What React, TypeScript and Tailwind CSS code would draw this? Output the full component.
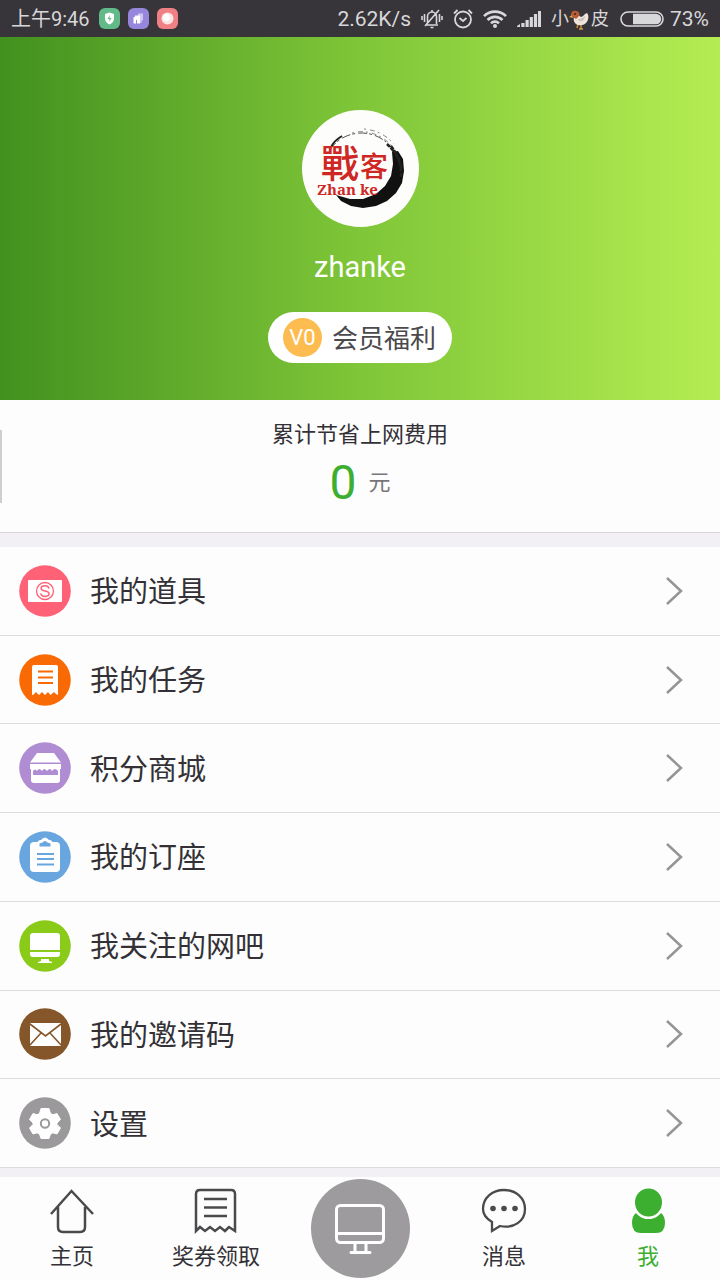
import type { ReactNode } from "react";

const StatusBar = () => (
  <header className="flex h-[37px] shrink-0 items-center justify-between bg-[#37343a] px-[11px] text-[21px] leading-6 text-[#d8d7d9]">
    <div className="flex items-center gap-2">
      <span className="pr-px text-[20px]">上午9:46</span>
      <svg className="h-[21px] w-[21px]" viewBox="0 0 21 21">
        <rect width="21" height="21" rx="6" fill="#62ba88" />
        <path d="M10.500 4.500l4.500 1.500v4.500c0 3-2 5-4.500 6-2.500-1-4.500-3-4.500-6V6z" fill="#fff" />
        <path d="M11 7l-2.500 4h2l-.5 3 2.500-4h-2z" fill="#62ba88" />
      </svg>
      <svg className="h-[21px] w-[21px]" viewBox="0 0 21 21">
        <rect width="21" height="21" rx="6" fill="#9787dc" />
        <path d="M10 5.500h5v7h-1.500V15H10z" fill="#cfc8f2" />
        <path d="M5.500 9h1.500V7.500h5v8H9V12H8v3.500H5.500z" fill="#fff" />
      </svg>
      <svg className="h-[21px] w-[21px]" viewBox="0 0 21 21">
        <rect width="21" height="21" rx="6" fill="#ef8083" />
        <circle cx="10.500" cy="10.500" r="6" fill="#fbe4e4" />
        <circle cx="9.500" cy="9.500" r="3.500" fill="#fff" />
      </svg>
    </div>
    <div className="flex items-center gap-[10px]">
      <span>2.62K/s</span>
      {/* muted bell */}
      <svg className="h-[20px] w-[22px]" viewBox="0 0 22 20" fill="none" stroke="currentColor" strokeWidth="1.600">
        <path d="M5 16h12M6.500 15V7.500a4.500 4.500 0 0 1 9 0V15M11 1v2M9.500 18.500h3M18 1L4 17M3.500 5v8M1 7v4M18.500 5v8M21 7v4" />
      </svg>
      <svg className="h-[20px] w-[20px]" viewBox="0 0 20 20" fill="none" stroke="currentColor" strokeWidth="1.800">
        <circle cx="10" cy="10.500" r="8" />
        <path d="M6.500 9l3.500 3 3.500-3M1 4.500L4.500 1M19 4.500L15.500 1" />
      </svg>
      <svg className="h-[18px] w-[24px]" viewBox="0 0 24 18" fill="none" stroke="currentColor" strokeWidth="2.600">
        <path d="M1 6.200a15.500 15.500 0 0 1 22 0M4.500 10a10.500 10.500 0 0 1 15 0M8 13.300a5.600 5.600 0 0 1 8 0" />
        <circle cx="12" cy="16" r="2" fill="currentColor" stroke="none" />
      </svg>
      <svg className="h-[17px] w-[24px]" viewBox="0 0 24 17" fill="currentColor">
        <path d="M0 17v-1l3-2v3zM4.300 13h3.200v4H4.300zM8.500 10h3.200v7H8.500zM12.700 7h3.200v10h-3.200zM16.900 4h3.200v13h-3.200zM21 1h3v16h-3z" />
      </svg>
      <span className="flex items-center pr-px text-[18px]">
        小
        <svg className="h-[22px] w-[22px]" viewBox="0 0 22 22">
          <path d="M9 16l-1 4M12 16v5M10 21h4" stroke="#d8943c" strokeWidth="1.400" />
          <path d="M5 5c4 0 5 3 7 4 2 0 3-3 6-4 2 2 2 7-1 10-3 3-9 3-11 0-2-3-1-4-1-10z" fill="#eee4dc" />
          <path d="M2 7c0-3 2-5 5-4 3 0 4 3 3 5l-3 3-3-2z" fill="#b85a35" />
          <path d="M9 11c3 0 5-1 7-3 0 4-3 6-6 5z" fill="#cfbfb5" />
          <circle cx="6" cy="6" r="1" fill="#42251c" />
          <path d="M3 7L0 9l4 1z" fill="#e4a842" />
        </svg>
        皮
      </span>
      <span className="flex items-center gap-[6px]">
        <svg className="h-[16px] w-[44px]" viewBox="0 0 44 16">
          <rect x="1" y="1" width="42" height="14" rx="7" fill="none" stroke="currentColor" strokeWidth="1.600" />
          <path d="M13 2.800h23a5.200 5.200 0 0 1 0 10.400H13z" fill="currentColor" />
        </svg>
        73%
      </span>
    </div>
  </header>
);

const Avatar = () => (
  <svg className="h-[117px] w-[117px]" viewBox="0 0 117 117" role="img" aria-label="zhanke">
    <circle cx="58.500" cy="58.500" r="58.500" fill="#fdfefc" />
    {/* brush ring */}
    <path d="M90 42l6-1 5 8 1 12-2 12-6 10-9 8-11 5-13 2-12-2-10-5-5-6 14 4 13 0 13-5 9-8 6-10 2-12z" fill="#111" />
    <path d="M28 40C38 23 65 16 84 32" fill="none" stroke="#555" strokeWidth="1" strokeDasharray="9 2 3 3" />
    <path d="M29 37c2-4 6-8 11-11" fill="none" stroke="#222" strokeWidth="2" />
    <path d="M50 23c14-4 29 1 40 13M62 19c12 1 22 6 30 15" fill="none" stroke="#888" strokeWidth="1" strokeDasharray="2 4 5 3" />
    <path d="M85 34c10 9 15 20 14 33M89 36c6 8 10 15 10 23" fill="none" stroke="#222" strokeWidth="2.500" strokeDasharray="4 1 7 2" />
    <g fill="#cf2724">
      <text x="19" y="67" fontSize="38" fontWeight="500" fontFamily="'Noto Sans CJK TC', sans-serif">戰</text>
      <text x="58" y="67" fontSize="28" fontWeight="500" fontFamily="'Noto Sans CJK TC', sans-serif">客</text>
      <text x="15" y="85" fontSize="15" fontWeight="700" fontFamily="'Noto Serif', 'DejaVu Serif', serif">Zhan ke</text>
    </g>
  </svg>
);

const Disc = ({ color, children }: { color: string; children: ReactNode }) => (
  <svg className="h-[52px] w-[52px] shrink-0" viewBox="0 0 52 52" aria-hidden="true">
    <circle cx="26" cy="26" r="25.800" fill={color} />
    {children}
  </svg>
);

const menu = [
  {
    label: "我的道具",
    icon: (
      <Disc color="#ff6176">
        <rect x="9" y="15" width="34" height="22" rx="1" fill="#fff" />
        <circle cx="26" cy="26" r="8.500" fill="none" stroke="#ff6176" strokeWidth="1.300" />
        <path d="M30 23.500c-.5-2-2-2.800-4-2.800-2.300 0-3.900 1-3.900 2.700 0 3.600 8 1.500 8 5.200 0 1.800-1.700 2.800-4.100 2.800-2.300 0-4-1-4.300-3" fill="none" stroke="#ff6176" strokeWidth="1.500" />
      </Disc>
    ),
  },
  {
    label: "我的任务",
    icon: (
      <Disc color="#f96a05">
        <path d="M13 13q0-2 2-2h22q2 0 2 2v28l-2-1-2-2-3.500 3-2.500-3-3 3-3-3-3 3-3-3-3 3h-1z" fill="#fff" />
        <path d="M19 17.500h15M19 23.500h15M19 29h15" stroke="#f96a05" strokeWidth="1.800" />
      </Disc>
    ),
  },
  {
    label: "积分商城",
    icon: (
      <Disc color="#b08dd3">
        <path d="M18 11h17l7 9.500H11zM11 22h31v5H11z" fill="#fff" />
        <path d="M12 26h29v12q0 3-3 3H15q-3 0-3-3z" fill="#fff" />
        <path d="M14 29q2-3 4 0 2-4 5 0 2-4 5 0 3-4 5 0 3-4 6 0v4H14z" fill="#b08dd3" />
      </Disc>
    ),
  },
  {
    label: "我的订座",
    icon: (
      <Disc color="#69a5df">
        <rect x="11" y="11" width="30" height="30" rx="4" fill="#fff" />
        <path d="M18 14q0-5 4-5 4-5 8 0 4 0 4 5z" fill="#fff" />
        <path d="M20.500 15.500v-3l3-1q2.500-3 5 0l3 1v3z" fill="#69a5df" />
        <path d="M18 23h17M18 28h17M18 33.500h17" stroke="#69a5df" strokeWidth="1.800" />
      </Disc>
    ),
  },
  {
    label: "我关注的网吧",
    icon: (
      <Disc color="#8aca19">
        <path d="M11 30V16q0-3 3-3h24q3 0 3 3v14zM11 32h30v2q0 3-3 3H14q-3 0-3-3zM22 39h8v2l3 1v1H19v-1l3-1z" fill="#fff" />
      </Disc>
    ),
  },
  {
    label: "我的邀请码",
    icon: (
      <Disc color="#85562a">
        <rect x="11" y="15" width="31" height="23" rx="1" fill="#fff" />
        <path d="M11 16l15.500 12L42 16M11 37l11-12M42 37L31 25" fill="none" stroke="#85562a" strokeWidth="1.600" />
      </Disc>
    ),
  },
  {
    label: "设置",
    icon: (
      <Disc color="#9b999b">
        <path
          d="M22 11.500h8l1.500 5 2.500 1.200 4-1.200 3.500 6-3.500 3.500v1.500l3.500 3.500-3.500 6-4-1.200-2.500 1.200-1.500 4.500h-8l-1.500-4.500-2.500-1.200-4 1.200-3.500-6 3.500-3.500V26l-3.500-3.500 3.500-6 4 1.200 2.500-1.200z"
          fill="#fff" stroke="#fff" strokeLinejoin="round"
        />
        <circle cx="26" cy="26.500" r="4.200" fill="#fff" stroke="#9b999b" strokeWidth="2" />
      </Disc>
    ),
  },
];

const tabs = [
  {
    label: "主页",
    icon: (
      <svg className="h-[46px] w-[46px]" viewBox="0 0 46 46" fill="none" stroke="#4b494c" strokeWidth="2.500">
        <path d="M2 26L22.500 3 44 26M9 19v20q0 5 5 5h17q5 0 5-5V19" />
      </svg>
    ),
  },
  {
    label: "奖券领取",
    icon: (
      <svg className="h-[46px] w-[46px]" viewBox="0 0 46 46" fill="none" stroke="#4b494c" strokeWidth="2.500">
        <path d="M3 43V6q0-4 4-4h31q4 0 4 4v37l-6-4-4 4-5-4-5 4-5-4-5 4-5-4z" />
        <path d="M11 11h23M11 19.500h23M11 28h23" />
      </svg>
    ),
  },
  { label: "电脑", icon: null },
  {
    label: "消息",
    icon: (
      <svg className="h-[46px] w-[46px]" viewBox="0 0 46 46" fill="none" stroke="#4b494c" strokeWidth="2.300">
        <path d="M11 34v9l8-5c14 3 25-5 25-17C44 10 35 2 23 2S2 10 2 21c0 6 4 10 9 13z" />
        <g fill="#4b494c" stroke="none">
          <circle cx="12" cy="20.500" r="2.800" />
          <circle cx="23" cy="20.500" r="2.800" />
          <circle cx="34" cy="20.500" r="2.800" />
        </g>
      </svg>
    ),
  },
  {
    label: "我",
    active: true,
    icon: (
      <svg className="h-[46px] w-[46px]" viewBox="0 0 46 46" fill="#3cae30">
        <path d="M11 25q12 12 25 0 4 3 4 10 0 10-9 10H16q-9 0-9-10 0-7 4-10z" />
        <circle cx="23.500" cy="15.500" r="15.500" fill="#fdfdfd" />
        <ellipse cx="23.500" cy="14.500" rx="13.500" ry="14" />
      </svg>
    ),
  },
];

export default function App() {
  return (
    <div className="flex min-h-screen flex-col bg-[#f2f0f4] font-[Roboto,'Noto_Sans_CJK_SC',sans-serif] text-[#333136]">
      <StatusBar />

      {/* Profile */}
      <section className="flex flex-col items-center bg-linear-to-r from-[#42911f] via-[#7fc638] to-[#b4ed52] pt-[73px] pb-[37px]">
        <Avatar />
        <h1 className="mt-[22px] text-[29px] leading-9 text-white">zhanke</h1>
        <button type="button" className="mt-[27px] flex h-[51px] items-center gap-[10px] rounded-full bg-white pr-4 pl-[15px] text-[26px] text-[#4b494c]">
          <span className="flex h-[39px] w-[39px] items-center justify-center rounded-full bg-[#fdbc50] text-[22px] text-white">V0</span>
          <span className="pt-1">会员福利</span>
        </button>
      </section>

      {/* Savings */}
      <section className="relative border-b border-[#d8d6da] bg-[#fdfdfd] pt-[21px] pb-[15px] text-center">
        <div className="absolute top-[30px] left-0 h-[73px] w-[2px] bg-[#cfcfd1]" />
        <h2 className="text-[22px] leading-7">累计节省上网费用</h2>
        <p className="flex h-[68px] items-center justify-center gap-3">
          <span className="text-[48px] text-[#3cae30]">0</span>
          <span className="text-[22px] leading-8 text-[#777579]">元</span>
        </p>
      </section>

      {/* Menu */}
      <ul className="mt-[14px] grid flex-1 auto-rows-fr bg-[#fdfdfd]">
        {menu.map((item) => (
          <li key={item.label} className="border-b border-[#dedce0]">
            <a href="#" className="flex h-full items-center pr-[37px] pl-[19px]">
              {item.icon}
              <span className="ml-[19px] flex-1 pt-[3px] text-[29px] leading-10">{item.label}</span>
              <svg className="h-[28px] w-[18px]" viewBox="0 0 18 28" fill="none" stroke="#969498" strokeWidth="2.500">
                <path d="M2 1l14 13L2 27" />
              </svg>
            </a>
          </li>
        ))}
      </ul>

      {/* Tab bar */}
      <nav className="mt-[9px] grid h-[103px] grid-cols-5 bg-[#fdfdfd]">
        {tabs.map((tab) =>
          tab.icon ? (
            <button
              key={tab.label}
              type="button"
              className={`flex flex-col items-center gap-[11px] pt-[11px] text-[22px] leading-6 ${tab.active ? "text-[#3cae30]" : ""}`}
            >
              {tab.icon}
              {tab.label}
            </button>
          ) : (
            <button key={tab.label} type="button" aria-label={tab.label} className="flex items-center justify-center">
              <span className="flex h-[99px] w-[99px] items-center justify-center rounded-full bg-[#9d9b9e]">
                <svg className="h-[52px] w-[52px]" viewBox="0 0 52 52" fill="none" stroke="#fff" strokeWidth="3" strokeLinecap="round">
                  <rect x="2.500" y="2.500" width="47" height="37" rx="4" />
                  <path d="M3 30.500h46M21 40v9M32 40v9M17 49.500h19" />
                </svg>
              </span>
            </button>
          ),
        )}
      </nav>
    </div>
  );
}
